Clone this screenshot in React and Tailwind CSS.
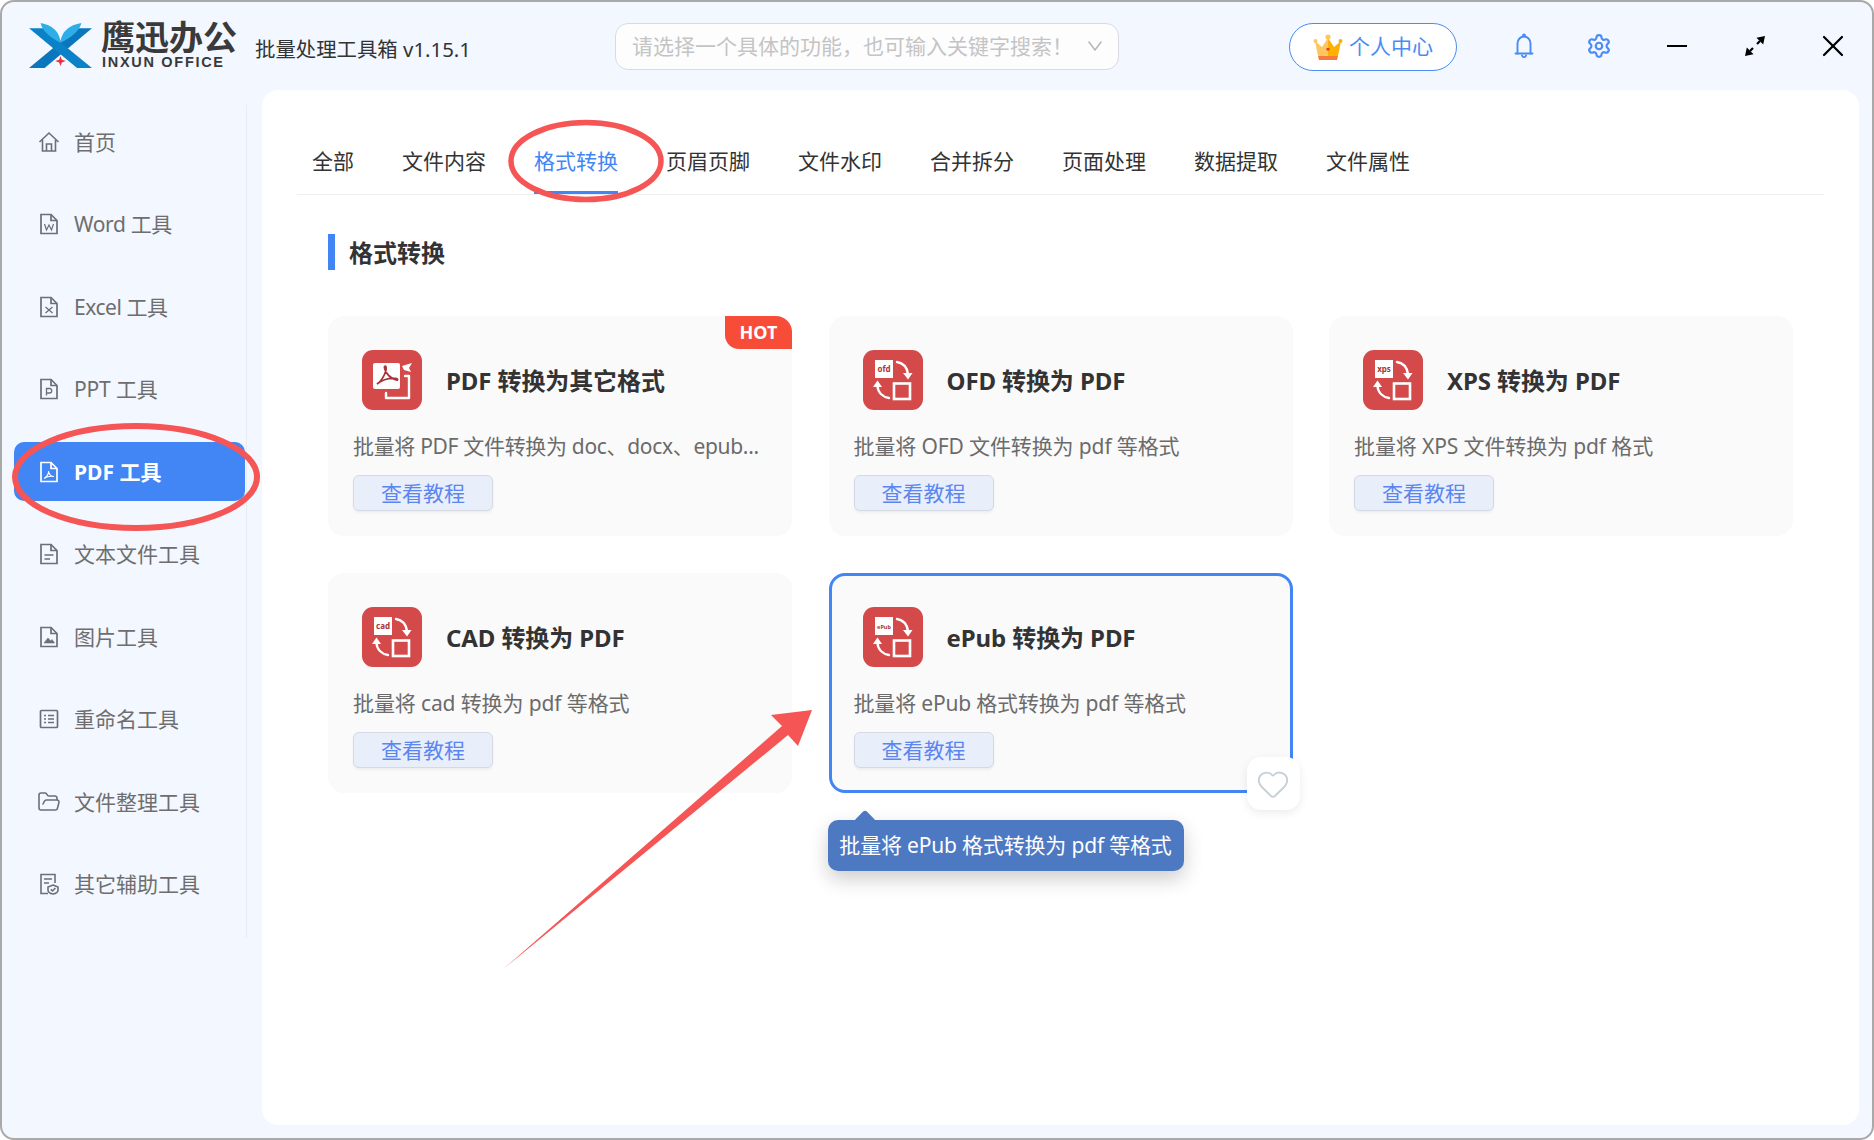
import { FolderOpen, Heart, Settings, X } from "lucide-react";

const menu = [
  { name: "首页" },
  { name: "Word 工具", tight: "tracking-[-0.35px]" },
  { name: "Excel 工具", tight: "tracking-[-0.45px]" },
  { name: "PPT 工具", tight: "tracking-[-0.15px]" },
  { name: "PDF 工具" },
  { name: "文本文件工具" },
  { name: "图片工具" },
  { name: "重命名工具" },
  { name: "文件整理工具" },
  { name: "其它辅助工具" },
];
const tabs = ["全部", "文件内容", "格式转换", "页眉页脚", "文件水印", "合并拆分", "页面处理", "数据提取", "文件属性"];
const cards = [
  { label: "pdf", title: "PDF 转换为其它格式", desc: "批量将 PDF 文件转换为 doc、docx、epub...", hot: true, tight: "tracking-[-0.32px]" },
  { label: "ofd", title: "OFD 转换为 PDF", desc: "批量将 OFD 文件转换为 pdf 等格式", tight: "tracking-[-0.12px]" },
  { label: "xps", title: "XPS 转换为 PDF", desc: "批量将 XPS 文件转换为 pdf 格式", tight: "tracking-[-0.12px]" },
  { label: "cad", title: "CAD 转换为 PDF", desc: "批量将 cad 转换为 pdf 等格式", tight: "tracking-[-0.12px]" },
  { label: "ePub", title: "ePub 转换为 PDF", desc: "批量将 ePub 格式转换为 pdf 等格式", active: true, tight: "tracking-[-0.18px]" },
];

function Logo() {
  return (
    <svg width="67" height="48" viewBox="20 30 200 145" className="flex-none -mt-[2px]">
      <polygon points="215,52 170,52 25,172 72,172" fill="#0a76bd" />
      <polygon points="25,52 68,52 215,172 170,172" fill="#0b82c8" />
      <path d="M60,36 Q112,46 120,90 Q128,46 183,36 Q176,68 120,96 Q66,68 60,36Z" fill="#2eaee6" />
      <polygon points="120,136 124,147 136,151 124,155 120,166 116,155 104,151 116,147" fill="#e8323c" />
    </svg>
  );
}

function Crown() {
  return (
    <svg width="30" height="30" viewBox="0 0 30 30" className="flex-none">
      <path d="M15 6 L21 15 L28 9 L25 24 L15 24Z" fill="#ffb000" />
      <path d="M15 6 L9 15 L2 9 L5 24 L15 24Z" fill="#fdc65f" />
      <circle cx="15" cy="5" r="2.6" fill="#fdc65f" />
      <circle cx="2.5" cy="9" r="2" fill="#fdc65f" />
      <circle cx="27.5" cy="9" r="2" fill="#ffb000" />
      <rect x="13.5" y="16" width="3" height="2.5" fill="#d8402a" />
      <path d="M5 24 H25 L24 28 H6Z" fill="#f47b3a" />
    </svg>
  );
}

function BellIcon() {
  return (
    <svg width="22" height="26" viewBox="0 0 22 26" fill="none" stroke="#4a8bf5" strokeWidth="1.9" strokeLinecap="round" className="flex-none ml-[56px]">
      <path d="M2.5 20.5 H19.5" />
      <path d="M4.5 20.5 V10.5 C4.5 6.5 7.5 3.5 11 3.5 C14.5 3.5 17.5 6.5 17.5 10.5 V20.5" />
      <circle cx="11" cy="2.4" r="1" fill="#4a8bf5" />
      <path d="M9 22.5 C9.5 24.6 12.5 24.6 13 22.5" />
    </svg>
  );
}

function FileIcon({ children, color }) {
  return (
    <svg width="20" height="22" viewBox="0 0 20 22" fill="none" stroke={color} strokeWidth="1.7" className="flex-none">
      <path d="M2 1.5 H12 L18 7.5 V20.5 H2Z" />
      <path d="M12 1.5 V7.5 H18" />
      {children}
    </svg>
  );
}

function MenuIcon({ name, color }) {
  if (name === "首页")
    return (
      <svg width="22" height="22" viewBox="0 0 22 22" fill="none" stroke={color} strokeWidth="1.6" className="flex-none -ml-[1px]">
        <path d="M1.5 11 L11 2 L20.5 11 M4.5 9 V20 H17.5 V9 M8.5 20 V13 H13.5 V20" />
      </svg>
    );
  if (name === "文件整理工具") return <FolderOpen size={24} color={color} strokeWidth={1.6} className="flex-none -ml-[2px]" />;
  if (name === "重命名工具")
    return (
      <svg width="20" height="20" viewBox="0 0 20 20" fill="none" stroke={color} strokeWidth="1.7" className="flex-none">
        <rect x="1.5" y="1.5" width="17" height="17" rx="1" />
        <path d="M5 6.5 H7 M9 6.5 H15 M5 10 H7 M9 10 H15 M5 13.5 H7 M9 13.5 H15" />
      </svg>
    );
  if (name === "其它辅助工具")
    return (
      <svg width="20" height="22" viewBox="0 0 20 22" fill="none" stroke={color} strokeWidth="1.6" className="flex-none">
        <path d="M9 20.5 H2 V1.5 H16 V10" />
        <path d="M5 6 H13 M5 10 H10" />
        <path d="M14 12 L19 14 V17 C19 19 17 20.5 14 21 C11 20.5 9 19 9 17 V14Z" />
        <path d="M11.8 16.4 L13.6 18 L16.4 15" />
      </svg>
    );
  return (
    <FileIcon color={color}>
      {name.startsWith("Word") && <path d="M5.5 11 L7.5 17 L10 12 L12.5 17 L14.5 11" strokeWidth="1.2" />}
      {name.startsWith("Excel") && <path d="M6.5 11 L13.5 17 M13.5 11 L6.5 17" strokeWidth="1.3" />}
      {name.startsWith("PPT") && <path d="M7.5 17.5 V10.5 H11 A2.3 2.3 0 0 1 11 15 H7.5" strokeWidth="1.3" />}
      {name.startsWith("PDF") && <path d="M5 17.5 C8 16 10 12.5 9.5 10 C10 13 12 15.5 15 15.5 C12 15 8 15.5 5 17.5Z" strokeWidth="1.1" />}
      {name === "文本文件工具" && <path d="M5.5 12 H14.5 M5.5 16 H11" />}
      {name === "图片工具" && <path d="M5 17 L9 12 L11.5 15 L13 13.5 L15.5 17Z" fill={color} strokeWidth="0.6" />}
    </FileIcon>
  );
}

function CardIcon({ label }) {
  if (label === "pdf")
    return (
      <svg width="60" height="60" viewBox="0 0 60 60" className="flex-none">
        <rect width="60" height="60" rx="11" fill="#d44a4a" />
        <rect x="11" y="13" width="27" height="26" rx="2" fill="#fff" />
        <path d="M15 34 C19 32 25 22 24 17 C23.5 15.5 22 16 22.5 18 C23 22 28 29 35 30 C36 30.5 36 28.5 34 28.5 C28 28 20 30 15 34Z" fill="none" stroke="#a8343a" strokeWidth="1.8" />
        <path d="M43 26 H47 V48 H24 V43" fill="none" stroke="#fff" strokeWidth="2.4" strokeLinecap="round" strokeLinejoin="round" />
        <path d="M40 16 L50 13 L47 18 L49 22 L42 20Z" fill="#fff" />
      </svg>
    );
  return (
    <svg width="60" height="60" viewBox="0 0 60 60" className="flex-none">
      <rect width="60" height="60" rx="11" fill="#d44a4a" />
      <rect x="12" y="10" width="18" height="18" fill="#fff" />
      <text x="21" y="22" textAnchor="middle" fontSize={label === "ePub" ? 5.5 : 8} fontWeight="700" fill="#a8343a" fontFamily="'Noto Sans', sans-serif">
        {label}
      </text>
      <path d="M34 12 C40 13 44 17 45 24" fill="none" stroke="#fff" strokeWidth="2.4" strokeLinecap="round" />
      <path d="M40 23 H49.5 L45 29.5Z" fill="#fff" />
      <rect x="31" y="33.5" width="16" height="15.5" fill="none" stroke="#fff" strokeWidth="2.6" />
      <path d="M26 48 C20 47 15 43 14.5 36" fill="none" stroke="#fff" strokeWidth="2.4" strokeLinecap="round" />
      <path d="M10 37 L14.5 30.5 L19 37Z" fill="#fff" />
    </svg>
  );
}

function Card({ card }) {
  return (
    <div className={`relative w-[464px] h-[220px] rounded-[16px] border-[3px] bg-[#fafafa] pt-[31px] pl-[22px] ${card.active ? "border-[#4285f4]" : "border-transparent"}`}>
      {card.hot && (
        <div className="absolute -top-[3px] -right-[3px] w-[67px] h-[33px] flex items-center justify-center rounded-tr-[16px] rounded-bl-[14px] bg-[#f64c38] text-white text-[18px] font-bold">
          HOT
        </div>
      )}
      <div className="flex items-center h-[60px] pl-[9px]">
        <CardIcon label={card.label} />
        <div className="ml-[24px] pt-[2px] text-[24px] font-bold text-[#333] tracking-[-0.1px]">{card.title}</div>
      </div>
      <div className={`mt-[20px] h-[32px] leading-[32px] text-[21px] text-[#6b6b6b] whitespace-nowrap ${card.tight}`}>{card.desc}</div>
      <button type="button" className="mt-[13px] w-[140px] h-[36px] rounded-[6px] border border-[#d5d9e4] bg-[#e9eefb] text-[21px] leading-[32px] text-[#5b86f0] shadow-[0_2px_3px_rgba(0,0,0,0.05)]">
        查看教程
      </button>
      {card.active && (
        <>
          <div className="absolute left-[415px] top-[181px] w-[53px] h-[53px] flex items-center justify-center rounded-[14px] bg-white shadow-[0_3px_10px_rgba(0,0,0,0.08)]">
            <Heart size={34} color="#c5d0d8" strokeWidth={1.3} />
          </div>
          <div className="absolute -left-[4px] top-[244px] w-[356px] h-[51px] flex items-center justify-center rounded-[10px] bg-[#4d78c2] text-white text-[21px] whitespace-nowrap shadow-[0_8px_20px_rgba(0,0,0,0.2)]">
            <span className="absolute left-[29px] -top-[7px] w-[16px] h-[16px] rotate-45 rounded-[3px] bg-[#4d78c2]" />
            <span className="relative pt-[1px] tracking-[-0.18px]">批量将 ePub 格式转换为 pdf 等格式</span>
          </div>
        </>
      )}
    </div>
  );
}

export default function App() {
  return (
    <div className="relative w-[1874px] h-[1140px] overflow-hidden bg-white font-['Noto_Sans','Noto_Sans_CJK_SC',sans-serif]">
      <div className="flex flex-col h-full rounded-[14px] border-2 border-[#a9a9a9] bg-[#f3f7ff]">
        {/* title bar */}
        <div className="flex items-center h-[88px] flex-none pl-[25px]">
          <Logo />
          <div className="ml-[7px] -mt-[2px] w-[139px] flex-none">
            <div className="text-[34px] leading-[32px] font-bold text-[#3a3a3a] whitespace-nowrap">鹰迅办公</div>
            <div className="mt-[2px] pl-[1px] text-[14.5px] leading-[14px] font-bold tracking-[1.7px] text-[#3a3a3a] whitespace-nowrap font-['Liberation_Sans',sans-serif]">INXUN OFFICE</div>
          </div>
          <div className="ml-[15px] w-[360px] pt-[7px] flex-none text-[20.4px] text-[#333] whitespace-nowrap">批量处理工具箱 v1.15.1</div>
          <div className="flex items-center justify-between w-[504px] h-[47px] flex-none px-[16px] rounded-[13px] border border-[#d8dbe2] bg-[#fdfdfe]">
            <span className="pt-[1px] text-[21px] text-[#c4c4c4] whitespace-nowrap">请选择一个具体的功能，也可输入关键字搜索！</span>
            <svg width="14" height="10" viewBox="0 0 14 10" fill="none" stroke="#b5b5b5" strokeWidth="1.5" className="flex-none">
              <path d="M0.5 0.5 L7 9 L13.5 0.5" />
            </svg>
          </div>
          <div className="ml-[170px] mt-[2px] flex items-center justify-center gap-[6px] w-[168px] h-[48px] flex-none rounded-full border border-[#4a8bf5] bg-white text-[21px] text-[#4a8bf5] whitespace-nowrap">
            <Crown />
            个人中心
          </div>
          <BellIcon />
          <Settings size={26} color="#4a8bf5" strokeWidth={2} className="ml-[51px] flex-none" />
          <div className="ml-[55px] w-[20px] h-[2px] bg-black flex-none" />
          <svg width="22" height="22" viewBox="0 0 22 22" className="ml-[57px] flex-none">
            <path d="M21 1 L12.5 2.8 L19.2 9.5Z M1 21 L9.5 19.2 L2.8 12.5Z" fill="#000" />
            <path d="M16 6 L13 9 M6 16 L9 13" stroke="#000" strokeWidth="2.2" />
          </svg>
          <X size={36} color="#000" strokeWidth={1.5} className="ml-[49px] flex-none" />
        </div>

        <div className="flex flex-1 min-h-0 pr-[13px] pb-[13px]">
          {/* sidebar */}
          <div className="w-[260px] flex-none">
            <div className="mt-[15px] pt-[7px] pb-[24px] pl-[12px] w-[245px] border-r border-[#e8ebf2] flex flex-col gap-[23.5px]">
              {menu.map(({ name, tight }) => {
                const active = name === "PDF 工具";
                return (
                  <div
                    key={name}
                    className={`flex items-center h-[59px] w-[231px] pl-[25px] rounded-[10px] text-[21px] whitespace-nowrap ${active ? "bg-[#4285f4] text-white font-bold" : "text-[#6e6e6e]"}`}
                  >
                    <div className="w-[35px] flex-none">
                      <MenuIcon name={name} color={active ? "#ffffff" : "#6b6f78"} />
                    </div>
                    <span className={`pt-[2px] ${tight || ""}`}>{name}</span>
                  </div>
                );
              })}
            </div>
          </div>

          {/* main panel */}
          <div className="flex-1 min-w-0 rounded-[16px] bg-white">
            <div className="mx-[35px] h-[105px] flex items-end gap-[48px] pl-[15px] border-b border-[#eeeeee]">
              {tabs.map((tab) => (
                <div
                  key={tab}
                  className={`flex items-center h-[61px] border-b-[3px] text-[21px] whitespace-nowrap ${tab === "格式转换" ? "border-[#4285f4] text-[#4285f4]" : "border-transparent text-[#333]"}`}
                >
                  {tab}
                </div>
              ))}
            </div>
            <div className="ml-[66px] mt-[38px] flex items-center">
              <div className="w-[7px] h-[36px] bg-[#4285f4]" />
              <div className="ml-[14px] pt-[2px] text-[24px] font-bold text-[#333]">格式转换</div>
            </div>
            <div className="ml-[66px] mt-[45px] grid grid-cols-[464px_464px_464px] gap-x-[36.5px] gap-y-[37px]">
              {cards.map((card) => (
                <Card key={card.label} card={card} />
              ))}
            </div>
          </div>
        </div>
      </div>

      {/* hand drawn annotations */}
      <svg width="1874" height="1140" className="absolute inset-0 pointer-events-none">
        <ellipse cx="586" cy="161" rx="75" ry="38.5" fill="none" stroke="#f55555" strokeWidth="5.5" />
        <ellipse cx="136" cy="477" rx="121" ry="51" fill="none" stroke="#f55555" strokeWidth="6" />
        <polygon points="501,971 782,726 771,715 812,710 798,746 788,735" fill="#f55555" />
      </svg>
    </div>
  );
}
